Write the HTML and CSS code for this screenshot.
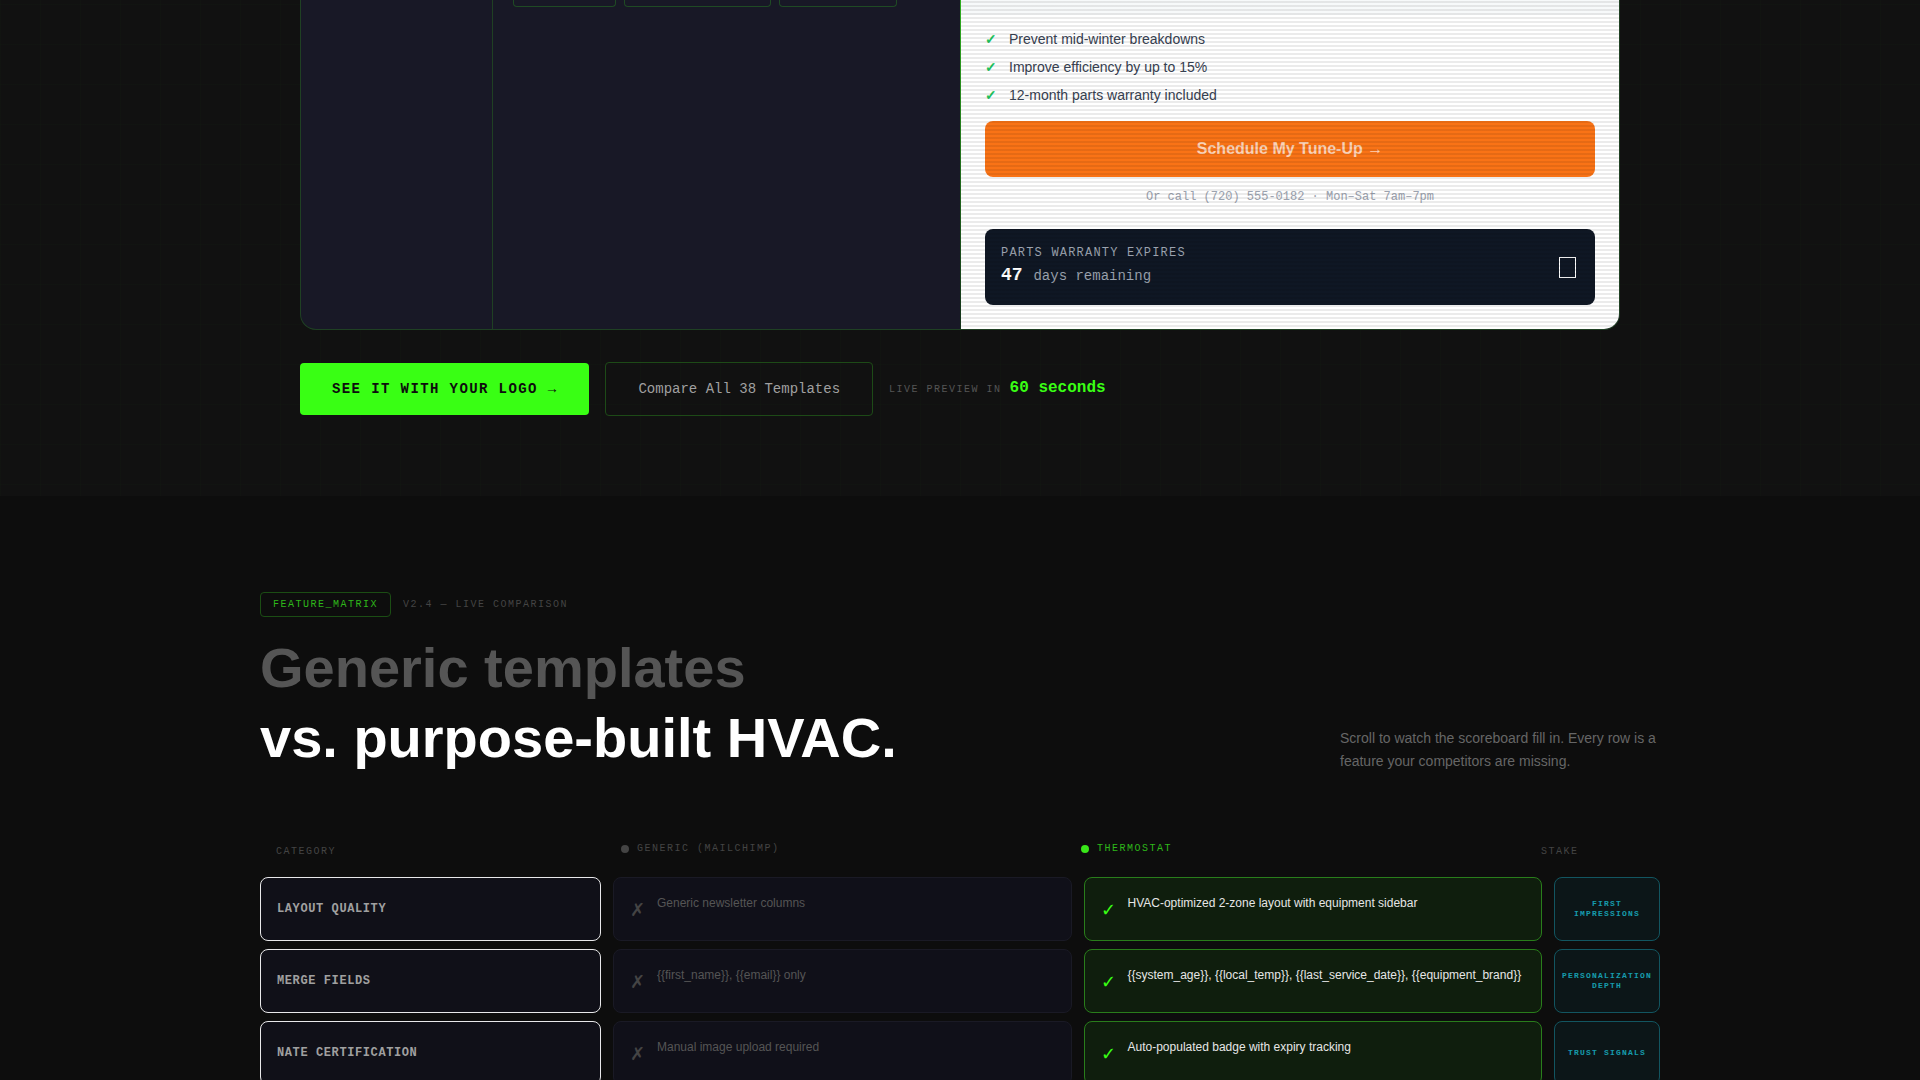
FILE: index.html
```html
<!DOCTYPE html>
<html lang="en">
<head>
	<meta charset="utf-8">
	<meta name="viewport" content="width=device-width,initial-scale=1.0">
	<title>Thermostat - HVAC email templates</title>
	<link rel="stylesheet" href="styles.css">
</head>
<body>
	<section class="demo">
		<div class="demo-inner">
			<div class="builder">
				<div class="editor">
					<div class="sidebar"></div>
					<div class="canvas">
						<div class="chip chip-sm"></div>
						<div class="chip chip-lg"></div>
						<div class="chip chip-md"></div>
					</div>
				</div>
				<div class="preview">
					<div class="promo"></div>
					<ul class="benefits">
						<li><span class="tick">✓</span>Prevent mid-winter breakdowns</li>
						<li><span class="tick">✓</span>Improve efficiency by up to 15%</li>
						<li><span class="tick">✓</span>12-month parts warranty included</li>
					</ul>
					<button class="schedule" type="button">Schedule My Tune-Up →</button>
					<p class="call">Or call (720) 555-0182 · Mon–Sat 7am–7pm</p>
					<div class="warranty">
						<div>
							<div class="warranty-label">PARTS WARRANTY EXPIRES</div>
							<div class="warranty-days"><strong>47</strong> <span>days remaining</span></div>
						</div>
						<svg class="warranty-icon" width="17" height="21" viewBox="0 0 17 21"><rect x="0.5" y="0.5" width="16" height="20" fill="none" stroke="#fff"/></svg>
					</div>
				</div>
			</div>
			<div class="actions">
				<a class="btn btn-primary" href="#">SEE IT WITH YOUR LOGO →</a>
				<a class="btn btn-ghost" href="#matrix">Compare All 38 Templates</a>
				<p class="timer"><span>LIVE PREVIEW IN</span> <strong>60 seconds</strong></p>
			</div>
		</div>
	</section>

	<section class="matrix" id="matrix">
		<div class="matrix-meta">
			<span class="tag">FEATURE_MATRIX</span>
			<span class="version">V2.4 — LIVE COMPARISON</span>
		</div>
		<div class="matrix-head">
			<h2><span class="dim">Generic templates</span><br>vs. purpose-built HVAC.</h2>
			<p>Scroll to watch the scoreboard fill in. Every row is a feature your competitors are missing.</p>
		</div>
		<table class="board">
			<thead>
				<tr>
					<th>CATEGORY</th>
					<th class="with-dot"><span class="dot"></span>GENERIC (MAILCHIMP)</th>
					<th class="with-dot on"><span class="dot"></span>THERMOSTAT</th>
					<th>STAKE</th>
				</tr>
			</thead>
			<tbody>
				<tr>
					<td class="category">LAYOUT QUALITY</td>
					<td class="generic"><span class="mark">✗</span><span>Generic newsletter columns</span></td>
					<td class="thermo"><span class="mark">✓</span><span>HVAC-optimized 2-zone layout with equipment sidebar</span></td>
					<td class="stake">FIRST IMPRESSIONS</td>
				</tr>
				<tr>
					<td class="category">MERGE FIELDS</td>
					<td class="generic"><span class="mark">✗</span><span>{{first_name}}, {{email}} only</span></td>
					<td class="thermo"><span class="mark">✓</span><span>{{system_age}}, {{local_temp}}, {{last_service_date}}, {{equipment_brand}}</span></td>
					<td class="stake">PERSONALIZATION DEPTH</td>
				</tr>
				<tr>
					<td class="category">NATE CERTIFICATION</td>
					<td class="generic"><span class="mark">✗</span><span>Manual image upload required</span></td>
					<td class="thermo"><span class="mark">✓</span><span>Auto-populated badge with expiry tracking</span></td>
					<td class="stake">TRUST SIGNALS</td>
				</tr>
			</tbody>
		</table>
	</section>
</body>
</html>
```
FILE: styles.css
```css
*{
	margin: 0;
	padding: 0;
	box-sizing: border-box;
}
html{
	background: #0d0d0d;
}
body{
	height: 100vh;
	overflow: hidden;
	font-family: "Liberation Sans", Arial, sans-serif;
	color: #fff;
}
ul{
	list-style: none;
}
a{
	text-decoration: none;
}

/* demo */
.demo{
	padding: 0 24px 80px;
	background-color: #111;
	background-image:
		linear-gradient(rgba(57, 255, 20, 0.012) 1px, transparent 1px),
		linear-gradient(90deg, rgba(57, 255, 20, 0.012) 1px, transparent 1px);
	background-size: 40px 40px;
	background-position: 0 4px;
}
.demo-inner{
	max-width: 1320px;
	margin: 0 auto;
}
.builder{
	display: grid;
	grid-template-columns: 1fr 1fr;
	border: 1px solid #1f4023;
	border-top: none;
	border-radius: 0 0 16px 16px;
	overflow: hidden;
	background: #181826;
}
.editor{
	display: grid;
	grid-template-columns: 192px 1fr;
}
.sidebar{
	border-right: 1px solid #1f4023;
}
.canvas{
	display: flex;
	align-items: flex-start;
	gap: 8px;
	padding: 0 20px;
}
.chip{
	height: 7px;
	border: 1px solid #1f4a24;
	border-top: none;
	border-radius: 0 0 4px 4px;
}
.chip-sm{
	width: 103px;
}
.chip-lg{
	width: 147px;
}
.chip-md{
	width: 118px;
}
.preview{
	position: relative;
	padding: 0 24px 24px;
	border-left: 1px solid;
	border-image: linear-gradient(#2fae1f, #14301a) 1;
	background: #fff;
}
.preview::after{
	content: "";
	position: absolute;
	inset: 0;
	background: repeating-linear-gradient(0deg, transparent 0 2px, rgba(0, 0, 0, 0.08) 2px 4px);
	pointer-events: none;
}
.promo{
	height: 15px;
	margin: 0 -24px 13px;
	background: #f7f9fa;
}
.benefits li{
	display: flex;
	align-items: center;
	height: 22px;
	margin-bottom: 6px;
	font-size: 14px;
	color: #374151;
}
.tick{
	width: 24px;
	font-weight: bold;
	color: #22c55e;
}
.schedule{
	display: block;
	width: 100%;
	height: 56px;
	margin-top: 15px;
	border: none;
	border-radius: 8px;
	background: #f97316;
	font: bold 16px "Liberation Sans", Arial, sans-serif;
	color: rgba(255, 255, 255, 0.7);
}
.call{
	margin-top: 12px;
	font: 12px/16px "Liberation Mono", monospace;
	text-align: center;
	color: #9ca3af;
}
.warranty{
	display: flex;
	justify-content: space-between;
	align-items: center;
	height: 76px;
	margin-top: 24px;
	padding: 0 16px;
	border-radius: 8px;
	background: #0f1724;
	font-family: "Liberation Mono", monospace;
	color: #9ca3af;
}
.warranty-label{
	font-size: 12px;
	line-height: 16px;
	letter-spacing: 0.1em;
}
.warranty-days{
	font-size: 18px;
	line-height: 28px;
}
.warranty-days strong{
	color: #fff;
}
.warranty-days span{
	font-size: 14px;
}
.warranty-icon{
	margin-right: 3px;
}
.actions{
	display: flex;
	align-items: center;
	gap: 16px;
	margin-top: 32px;
}
.btn{
	padding: 18px 32px;
	border-radius: 4px;
	font: 14px/16px "Liberation Mono", monospace;
}
.btn-primary{
	background: #39ff14;
	font-weight: bold;
	letter-spacing: 0.1em;
	color: #0d0d0d;
}
.btn-ghost{
	border: 1px solid #1d4a17;
	color: #a0a0a0;
}
.timer{
	display: flex;
	align-items: baseline;
	gap: 8px;
	font: 10px/20px "Liberation Mono", monospace;
	letter-spacing: 0.15em;
	color: #555;
}
.timer strong{
	font-size: 16px;
	letter-spacing: 0;
	color: #39ff14;
}

/* feature matrix */
.matrix{
	max-width: 1448px;
	margin: 0 auto;
	padding: 96px 24px;
}
.matrix-meta{
	display: flex;
	align-items: center;
	gap: 12px;
	font: 10px/15px "Liberation Mono", monospace;
	letter-spacing: 0.15em;
}
.tag{
	padding: 4px 12px;
	border: 1px solid #1b4d14;
	border-radius: 4px;
	color: #2eb81a;
}
.version{
	color: #444;
}
.matrix-head{
	display: flex;
	justify-content: space-between;
	align-items: flex-end;
	margin-top: 16px;
}
.matrix-head h2{
	font-size: 56px;
	line-height: 70px;
}
.dim{
	color: #555;
}
.matrix-head p{
	width: 320px;
	font-size: 14px;
	line-height: 23px;
	color: #666;
}
.board{
	display: block;
	margin-top: 64px;
}
.board thead, .board tbody{
	display: block;
}
.board tr{
	display: grid;
	grid-template-columns: 341px 1fr 1fr 106px;
	gap: 12px;
	margin-bottom: 8px;
}
.board thead tr{
	grid-template-columns: 345px 1fr 1fr 135px;
	gap: 0;
	align-items: start;
}
.board th{
	padding: 7px 16px 9px;
	font: 10px/16px "Liberation Mono", monospace;
	letter-spacing: 0.15em;
	text-align: left;
	color: #444;
}
.board .with-dot{
	display: flex;
	align-items: center;
	gap: 8px;
	padding: 4px 16px;
}
.board .on{
	color: #2eb81a;
}
.dot{
	width: 8px;
	height: 8px;
	border-radius: 50%;
	background: #444;
}
.on .dot{
	background: #39e619;
}
.board td{
	height: 64px;
	border: 1px solid #1a1a25;
	border-radius: 8px;
	font-size: 12px;
}
.board .category{
	display: flex;
	align-items: center;
	padding: 0 16px;
	border-color: #e8e8ea;
	background: #101018;
	font: bold 12px "Liberation Mono", monospace;
	letter-spacing: 0.05em;
	color: #a0a0a0;
}
.generic, .thermo{
	display: flex;
	gap: 12px;
	padding: 16px;
	line-height: 18px;
}
.mark{
	font-size: 18px;
	line-height: 32px;
}
.board .generic{
	background: #101019;
	color: #555;
}
.generic .mark{
	color: #444;
}
.board .thermo{
	border-color: #297d1b;
	background: #0f1e0d;
	color: #e6e6e6;
}
.thermo .mark{
	color: #39ff14;
}
.board .stake{
	display: flex;
	justify-content: center;
	align-items: center;
	padding: 0 8px;
	border-color: #125560;
	background: #0c1618;
	font: bold 8px/10px "Liberation Mono", monospace;
	letter-spacing: 0.15em;
	text-align: center;
	color: #169cad;
}
```
